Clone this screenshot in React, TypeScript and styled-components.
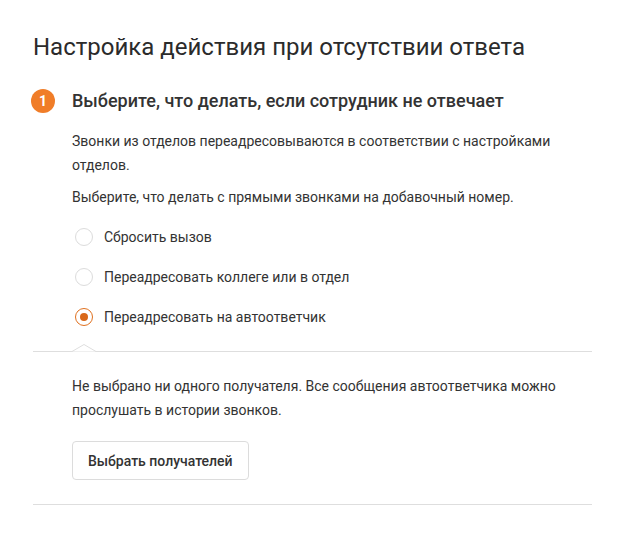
import React, { useState } from "react";
import styled, { createGlobalStyle } from "styled-components";

const Global = createGlobalStyle`
  html, body { margin: 0; padding: 0; background: #fff; }
  body { font-family: Roboto, "Noto Sans", "Liberation Sans", sans-serif; color: #333; -webkit-font-smoothing: antialiased; }
  * { box-sizing: border-box; }
`;

const Page = styled.div`
  padding: 31px 32px 30px 33px;
`;

const Title = styled.h1`
  margin: 0;
  font-size: 24px;
  line-height: 32px;
  font-weight: 400;
  color: #2b2b2b;
`;

const StepHeader = styled.div`
  display: flex;
  align-items: center;
  margin-top: 26px;
  height: 24px;
`;

const Badge = styled.span`
  width: 24px;
  height: 24px;
  border-radius: 50%;
  background: #f07d28;
  color: #fff;
  font-size: 14px;
  font-weight: 700;
  display: flex;
  align-items: center;
  justify-content: center;
  margin-left: -2px;
  margin-right: 17px;
  flex: none;
`;

const StepTitle = styled.h2`
  margin: 0;
  font-size: 18px;
  line-height: 24px;
  font-weight: 500;
  color: #333;
`;

const Indented = styled.div<{ $top?: number }>`
  padding-left: 39px;
  padding-top: ${(p) => p.$top ?? 0}px;
`;

const Text = styled.p<{ $gap?: number }>`
  margin: ${(p) => p.$gap ?? 0}px 0 0;
  max-width: 492px;
  font-size: 14px;
  line-height: 24px;
  color: #333;
`;

const RadioList = styled.div`
  display: flex;
  flex-direction: column;
  gap: 16px;
  margin-top: 16px;
`;

const RadioRow = styled.label`
  display: flex;
  align-items: center;
  height: 24px;
  cursor: pointer;
  font-size: 14px;
  color: #333;
`;

const RadioCircle = styled.span<{ $checked: boolean }>`
  width: 18px;
  height: 18px;
  border-radius: 50%;
  border: 1px solid ${(p) => (p.$checked ? "#e0701e" : "#dcdcdc")};
  display: flex;
  align-items: center;
  justify-content: center;
  margin-left: 3px;
  margin-right: 11px;
  flex: none;
  &::after {
    content: "";
    width: 8px;
    height: 8px;
    border-radius: 50%;
    background: #d9681a;
    display: ${(p) => (p.$checked ? "block" : "none")};
  }
`;

const Divider = styled.div<{ $top: number }>`
  position: relative;
  height: 1px;
  background: #dedede;
  margin-top: ${(p) => p.$top}px;
`;

const Notch = styled.svg`
  position: absolute;
  left: 39px;
  top: -7px;
`;

const Button = styled.button`
  margin-top: 19px;
  height: 39px;
  padding: 0 15px;
  border: 1px solid #dcdcdc;
  border-radius: 4px;
  background: #fff;
  font-family: inherit;
  font-size: 14px;
  font-weight: 500;
  color: #333;
  cursor: pointer;
`;

const options = [
  "Сбросить вызов",
  "Переадресовать коллеге или в отдел",
  "Переадресовать на автоответчик",
];

export default function App() {
  const [selected, setSelected] = useState(2);
  return (
    <>
      <Global />
      <Page>
        <Title>Настройка действия при отсутствии ответа</Title>
        <StepHeader>
          <Badge>1</Badge>
          <StepTitle>Выберите, что делать, если сотрудник не отвечает</StepTitle>
        </StepHeader>
        <Indented>
          <Text $gap={16}>
            Звонки из отделов переадресовываются в соответствии с настройками отделов.
          </Text>
          <Text $gap={8}>Выберите, что делать с прямыми звонками на добавочный номер.</Text>
          <RadioList>
            {options.map((o, i) => (
              <RadioRow key={o} onClick={() => setSelected(i)}>
                <RadioCircle $checked={selected === i} />
                {o}
              </RadioRow>
            ))}
          </RadioList>
        </Indented>
        <Divider $top={22}>
          <Notch width="24" height="8" viewBox="0 0 24 8">
            <polygon points="0,7.5 12,0.5 24,7.5" fill="#fff" />
            <polyline points="0,7.5 12,0.5 24,7.5" fill="none" stroke="#dedede" strokeWidth="1" />
          </Notch>
        </Divider>
        <Indented $top={22}>
          <Text>
            Не выбрано ни одного получателя. Все сообщения автоответчика можно прослушать в
            истории звонков.
          </Text>
          <Button>Выбрать получателей</Button>
        </Indented>
        <Divider $top={24} />
      </Page>
    </>
  );
}
